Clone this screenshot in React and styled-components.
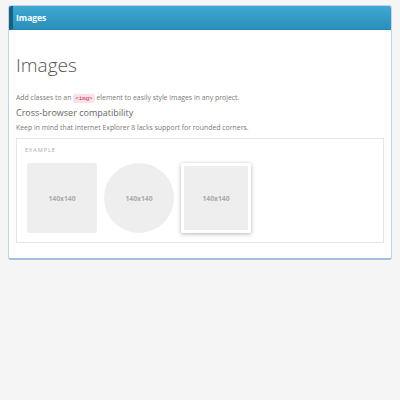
import styled, { createGlobalStyle } from "styled-components";

const GlobalStyle = createGlobalStyle`
  html, body {
    margin: 0;
    padding: 0;
    background: #f5f5f5;
    font-family: "Open Sans", "Liberation Sans", sans-serif;
  }
`;

const Page = styled.div`
  width: 400px;
  height: 400px;
  padding: 5px 8px 0 8px;
  box-sizing: border-box;
`;

const Panel = styled.section`
  background: #fff;
  border: 1px solid #c3d4ea;
  border-bottom: 2px solid #a7bfdc;
  border-radius: 3px;
  overflow: hidden;
`;

const PanelHeader = styled.header`
  height: 23px;
  display: flex;
  align-items: center;
  padding-left: 3px;
  background: linear-gradient(to bottom, #3ea8d3, #2a8fbb);
  border-left: 4px solid #17607f;
  border-bottom: 1px solid #2585ae;
  color: #fff;
  font-size: 8.5px;
  font-weight: 700;
`;

const PanelBody = styled.div`
  padding: 20px 7px 15px 7px;
`;

const Title = styled.h1`
  margin: 0;
  font-size: 19px;
  font-weight: 300;
  color: #555;
  line-height: 30px;
`;

const Lead = styled.p`
  margin: 12px 0 0 0;
  font-size: 6.9px;
  color: #7a7a7a;
  line-height: 12px;
`;

const Code = styled.code`
  font-family: "Liberation Mono", monospace;
  font-size: 5.8px;
  color: #c7254e;
  background: #f9e3e8;
  padding: 1px 2px;
  border-radius: 2px;
`;

const SubTitle = styled.h3`
  margin: 1px 0 0 0;
  font-size: 9px;
  font-weight: 400;
  color: #666;
  line-height: 14px;
`;

const Note = styled.p`
  margin: 2px 0 0 0;
  font-size: 6.9px;
  color: #7a7a7a;
  line-height: 12px;
`;

const Example = styled.div`
  margin-top: 4px;
  border: 1px solid #e5e5e5;
  padding: 7px 9px 9px 9px;
  height: 105px;
  box-sizing: border-box;
`;

const ExampleLabel = styled.div`
  font-size: 5.5px;
  letter-spacing: 1px;
  color: #aaa;
  line-height: 8px;
  margin-left: -1px;
`;

const Thumbs = styled.div`
  display: flex;
  gap: 7px;
  margin-top: 9px;
  padding-left: 1px;
`;

const Placeholder = styled.div`
  width: 70px;
  height: 70px;
  box-sizing: border-box;
  display: flex;
  align-items: center;
  justify-content: center;
  background: #eee;
  color: #aaa;
  font-size: 6.8px;
  font-weight: 700;
  border-radius: ${(p) => (p.$shape === "circle" ? "50%" : "3px")};
  ${(p) =>
    p.$shape === "thumb" &&
    `
    border: 3px solid #fff;
    border-radius: 2px;
    box-shadow: 0 1px 4px rgba(0, 0, 0, 0.3);
  `}
`;

export default function App() {
  return (
    <Page>
      <GlobalStyle />
      <Panel>
        <PanelHeader>Images</PanelHeader>
        <PanelBody>
          <Title>Images</Title>
          <Lead>
            Add classes to an <Code>&lt;img&gt;</Code> element to easily style images in any project.
          </Lead>
          <SubTitle>Cross-browser compatibility</SubTitle>
          <Note>Keep in mind that Internet Explorer 8 lacks support for rounded corners.</Note>
          <Example>
            <ExampleLabel>EXAMPLE</ExampleLabel>
            <Thumbs>
              <Placeholder $shape="rounded">140x140</Placeholder>
              <Placeholder $shape="circle">140x140</Placeholder>
              <Placeholder $shape="thumb">140x140</Placeholder>
            </Thumbs>
          </Example>
        </PanelBody>
      </Panel>
    </Page>
  );
}
